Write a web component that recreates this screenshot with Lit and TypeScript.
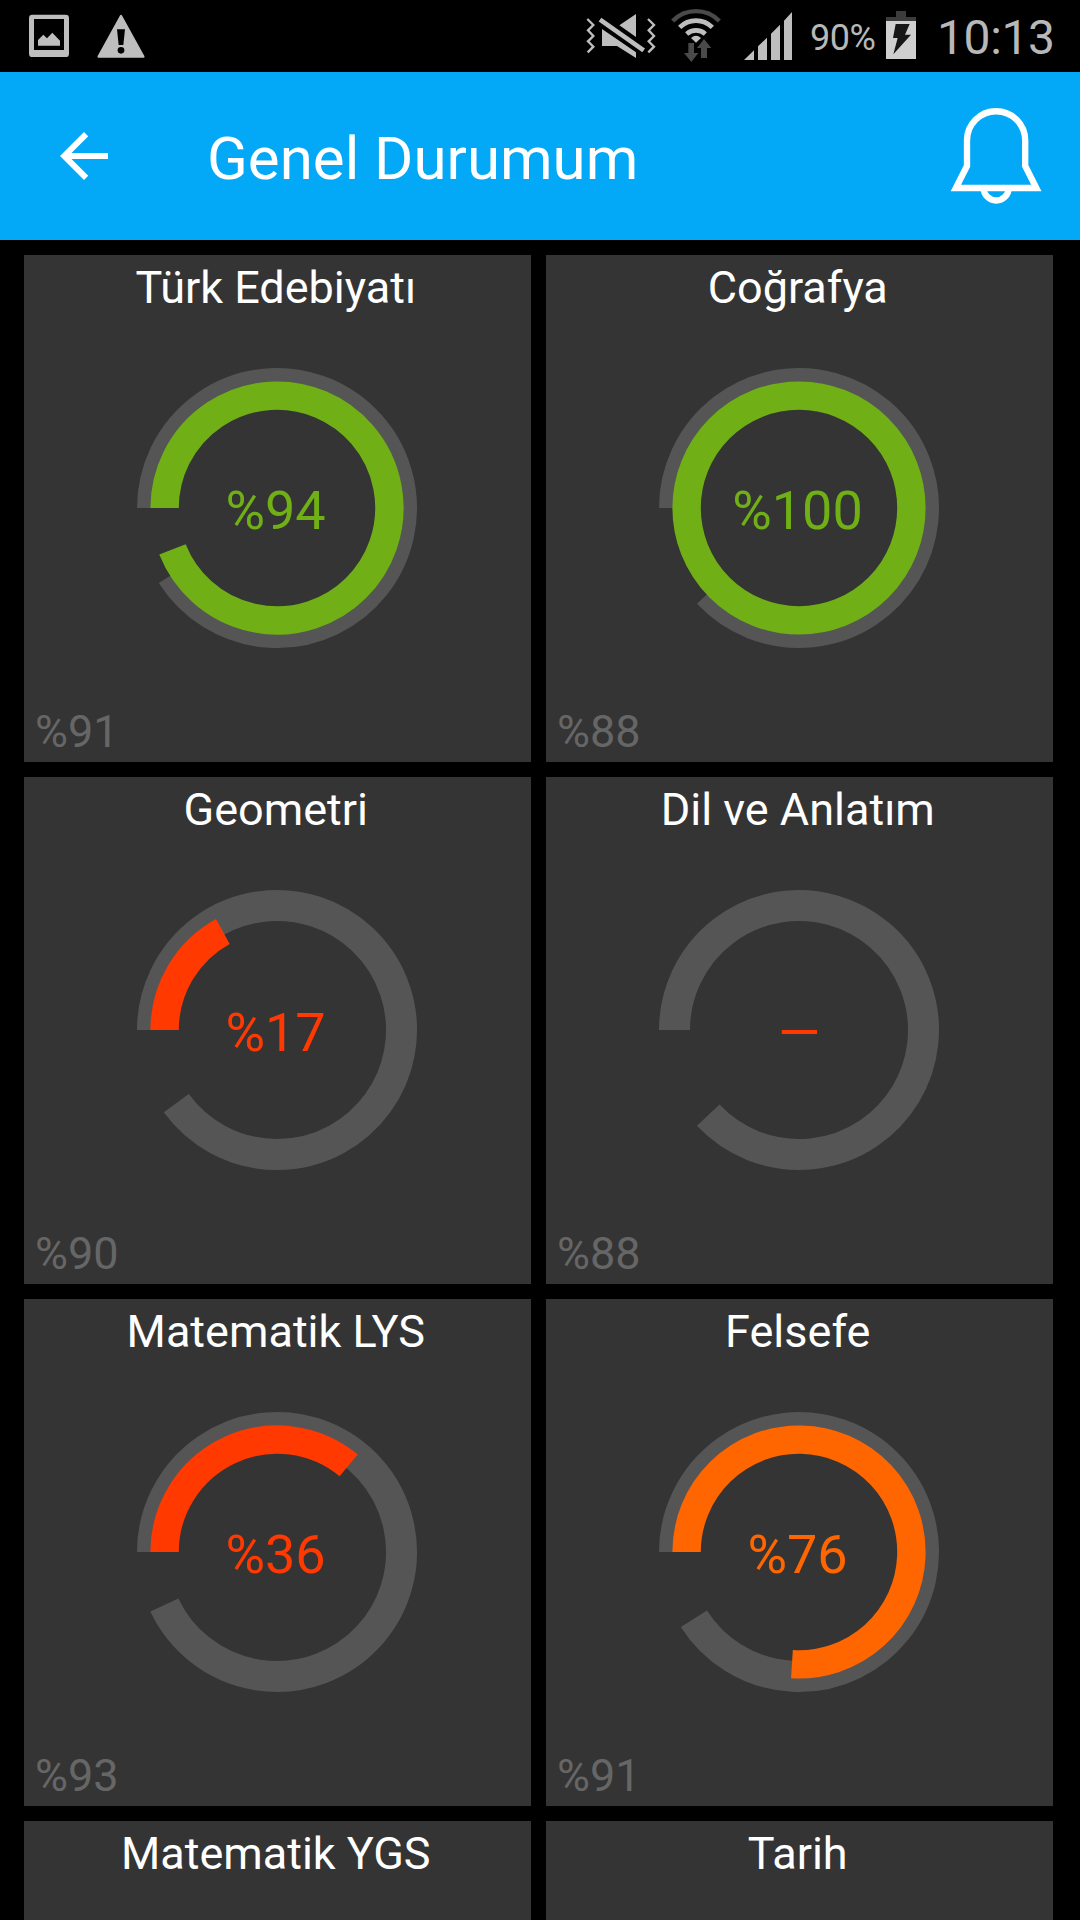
import { LitElement, html, css, svg, nothing } from "lit";
import { customElement, property } from "lit/decorators.js";

interface Subject {
  name: string;
  /* null: no score yet */
  score?: number | null;
  target?: number;
}

const SUBJECTS: Subject[] = [
  { name: "Türk Edebiyatı", score: 94, target: 91 },
  { name: "Coğrafya", score: 100, target: 88 },
  { name: "Geometri", score: 17, target: 90 },
  { name: "Dil ve Anlatım", score: null, target: 88 },
  { name: "Matematik LYS", score: 36, target: 93 },
  { name: "Felsefe", score: 76, target: 91 },
  { name: "Matematik YGS" },
  { name: "Tarih" },
];

/* Arc that starts at nine o'clock and runs clockwise, centred on 253,253. */
function ring(percent: number, radius: number, width: number, color: string) {
  if (percent >= 100) {
    return svg`<circle cx="253" cy="253" r=${radius} fill="none" stroke=${color} stroke-width=${width}></circle>`;
  }
  const a = (percent / 100) * Math.PI * 2;
  const x = 253 - radius * Math.cos(a);
  const y = 253 - radius * Math.sin(a);
  const d = `M${253 - radius} 253A${radius} ${radius} 0 ${percent > 50 ? 1 : 0} 1 ${x.toFixed(2)} ${y.toFixed(2)}`;
  return svg`<path d=${d} fill="none" stroke=${color} stroke-width=${width}></path>`;
}

function scoreColor(score: number | null): string {
  if (score === null || score < 50) return "#ff3900";
  return score < 80 ? "#ff6600" : "#70b016";
}

@customElement("status-bar")
export class StatusBar extends LitElement {
  static styles = css`
    :host {
      display: flex;
      height: 72px;
      background: #000;
      color: #b8b8b8;
      padding-left: 29px;
      box-sizing: border-box;
      font-family: Roboto, sans-serif;
    }
    svg {
      display: block;
      height: 72px;
      flex: none;
      fill: #bebebe;
    }
    .group {
      display: flex;
    }
    .left {
      gap: 28px;
      width: 557px;
    }
    .wifi {
      margin-left: 14px;
    }
    .signal {
      margin-left: 23px;
    }
    .percent {
      width: 76px;
      margin-left: 18px;
      font-size: 36px;
      letter-spacing: -0.5px;
      line-height: 76px;
      height: 72px;
      white-space: nowrap;
    }
    .clock {
      margin-left: 21px;
      font-size: 48px;
      letter-spacing: -0.4px;
      line-height: 75px;
      height: 72px;
      white-space: nowrap;
    }
    .line {
      fill: none;
      stroke: #bebebe;
    }
    .dim {
      fill: #4a4a4a;
    }
    .dim-line {
      fill: none;
      stroke: #4a4a4a;
    }
    .hole {
      fill: #000;
    }
  `;

  render() {
    return html`
      <div class="group left">
        <svg width="40" viewBox="87 0 120 216">
          <rect x="87" y="44" width="120" height="127" rx="10"></rect>
          <rect class="hole" x="102" y="57" width="90" height="93"></rect>
          <path d="M114 137V120L130 104L141 115L157 98L180 122V137Z"></path>
        </svg>
        <svg width="48" viewBox="291 0 144 216">
          <path d="M363 48L296 170H430Z" stroke="#bebebe" stroke-width="7" stroke-linejoin="round"></path>
          <path class="hole" d="M351 88H375L370 135H356Z"></path>
          <circle class="hole" cx="363" cy="151" r="10"></circle>
        </svg>
      </div>
      <div class="group">
        <svg width="71" viewBox="48 0 213 216">
          <path class="line" stroke-width="7" d="M52 57L70 75L54 91L70 108L54 124L70 140L53 157M234 57L252 75L236 91L252 108L236 124L252 140L235 157"></path>
          <path class="line" stroke-width="14" d="M90 59L221 151"></path>
          <path d="M148 76L198 42V111ZM96 87L198 157V174L141 138H96Z"></path>
        </svg>
        <svg class="wifi" width="50" viewBox="303 0 150 216">
          <path class="dim-line" stroke-width="13" d="M308 63A98 98 0 0 1 448 63"></path>
          <path class="line" stroke-width="14" d="M329 82A70 70 0 0 1 427 82"></path>
          <path class="line" stroke-width="14" d="M350 102A42 42 0 0 1 406 102"></path>
          <path d="M363 114Q378 101 393 114L378 128Z"></path>
          <path class="dim" d="M355 129H372V159H385L364 186L342 159H355ZM393 174H411V144H424L402 117L381 144H393Z"></path>
        </svg>
        <svg class="signal" width="48" viewBox="522 0 144 216">
          <path d="M522 180L552 151V180ZM564 180V139L591 113V180ZM603 180V101L630 74V180ZM642 180V62L666 36V180Z"></path>
        </svg>
        <div class="percent">90%</div>
        <svg width="30" viewBox="258 0 90 216">
          <path fill="#3c3c3c" d="M288 33H318V51H348V63H258V51H288Z"></path>
          <rect x="258" y="63" width="90" height="114" fill="#cfcfcf"></rect>
          <path d="M287 72H329L315 104H333L280 163L293 114H279Z" fill="#161616"></path>
        </svg>
        <div class="clock">10:13</div>
      </div>
    `;
  }
}

@customElement("subject-card")
export class SubjectCard extends LitElement {
  @property({ attribute: false }) subject!: Subject;

  static styles = css`
    :host {
      display: grid;
      background: #343434;
      font-family: Roboto, sans-serif;
      font-size: 45px;
      line-height: 53px;
    }
    .name,
    .dial,
    .value,
    .target {
      grid-area: 1 / 1;
    }
    .name {
      padding: 6px 3.5px 0 0;
      text-align: center;
      color: #fff;
      align-self: start;
    }
    .dial {
      display: block;
      width: 506px;
      height: 506px;
    }
    .value {
      align-self: center;
      text-align: center;
      font-size: 54px;
      line-height: 64px;
      padding: 4px 4px 0 0;
    }
    .empty {
      padding-right: 1px;
    }
    .target {
      align-self: end;
      padding: 0 0 4px 11px;
      color: #666;
    }
  `;

  private renderDial(score: number | null, target: number) {
    const color = scoreColor(score);
    return html`
      <svg class="dial" viewBox="0 0 506 506">
        ${ring(target, 124.5, 31, "#555")}
        ${score === null ? nothing : ring(score, 112.4, 28.4, color)}
      </svg>
      <div class="value ${score === null ? "empty" : ""}" style="color:${color}">${score === null ? "—" : `%${score}`}</div>
      <div class="target">%${target}</div>
    `;
  }

  render() {
    const { name, score, target } = this.subject;
    return html`
      ${score === undefined || target === undefined ? nothing : this.renderDial(score, target)}
      <div class="name">${name}</div>
    `;
  }
}

@customElement("app-root")
export class AppRoot extends LitElement {
  static styles = css`
    :host {
      display: block;
      width: 1080px;
      height: 1920px;
      overflow: hidden;
      background: #000;
      font-family: Roboto, sans-serif;
    }
    .bar {
      display: flex;
      align-items: center;
      height: 168px;
      box-sizing: border-box;
      padding: 0 37.6px 0 48px;
      background: #03a9f7;
      color: #fff;
    }
    .back {
      display: block;
      fill: #fff;
    }
    .title {
      flex: 1;
      margin: 0;
      padding: 5px 0 0 87px;
      font-size: 60px;
      line-height: 70px;
      font-weight: 400;
    }
    .bell {
      display: block;
      fill: none;
      stroke: #fff;
      stroke-width: 19;
    }
    .cards {
      display: grid;
      grid-template-columns: 507px 507px;
      grid-template-rows: repeat(3, 507px) 99px;
      gap: 15px;
      padding: 15px 24px 0;
    }
  `;

  render() {
    return html`
      <status-bar></status-bar>
      <header class="bar">
        <svg class="back" width="72" height="72" viewBox="0 0 24 24">
          <path d="M20 11H7.83l5.59-5.59L12 4l-8 8 8 8 1.41-1.41L7.83 13H20v-2z"></path>
        </svg>
        <h1 class="title">Genel Durumum</h1>
        <svg class="bell" width="92" height="100" viewBox="91 48 276 300">
          <path d="M142 228V151A87.3 87.3 0 0 1 316.6 151V228L350 294H108.5Z"></path>
          <path d="M192 294A37.5 37.5 0 0 0 267 294"></path>
        </svg>
      </header>
      <main class="cards">
        ${SUBJECTS.map((s) => html`<subject-card .subject=${s}></subject-card>`)}
      </main>
    `;
  }
}
